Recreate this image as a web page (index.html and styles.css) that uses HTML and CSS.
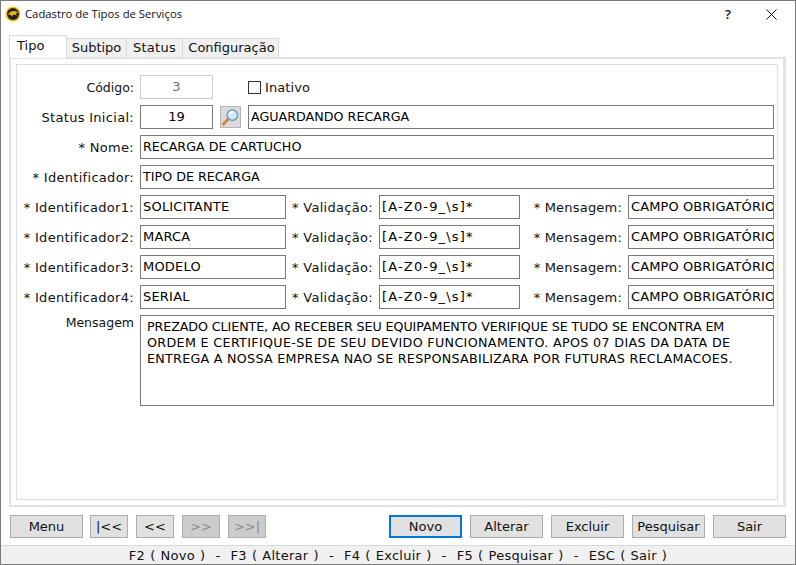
FILE: index.html
```html
<!DOCTYPE html>
<html lang="pt-BR">
<head>
    <meta charset="UTF-8">
    <meta name="viewport" content="width=device-width, initial-scale=1.0">
    <title>Cadastro de Tipos de Serviços</title>
    <link rel="stylesheet" href="styles.css">
</head>
<body>
    <div class="window">
        <header class="titlebar">
            <svg class="app-icon" width="16" height="16" viewBox="0 0 16 16">
                <circle cx="8" cy="8" r="7.5" fill="#f2c40f"/>
                <circle cx="8" cy="8" r="6" fill="#26221a"/>
                <path d="M2.5 8.5 L6 5.5 L10 5 L13.5 6.5 L10.5 7.5 L12 9.5 L8.5 8.5 L6.5 10.5 L5.5 8.5 Z" fill="#e8b90c"/>
            </svg>
            <span class="title">Cadastro de Tipos de Serviços</span>
            <span class="help">?</span>
            <svg class="close" width="11" height="11" viewBox="0 0 11 11">
                <path d="M0.5 0.5 L10.5 10.5 M10.5 0.5 L0.5 10.5" stroke="#111" stroke-width="1" fill="none"/>
            </svg>
        </header>

        <nav class="tabs">
            <div class="tab tab-active">Tipo</div>
            <div class="tab tab-subtipo">Subtipo</div>
            <div class="tab tab-status">Status</div>
            <div class="tab tab-config">Configuração</div>
        </nav>

        <section class="tab-pane">
            <div class="panel">
                <div class="row">
                    <label class="lbl lbl-main lbl-code">Código:</label>
                    <div class="field field-code field-disabled">3</div>
                    <span class="check"></span>
                    <span class="check-text">Inativo</span>
                </div>
                <div class="row">
                    <label class="lbl lbl-main">Status Inicial:</label>
                    <div class="field field-code">19</div>
                    <button class="lookup">
                        <svg width="20" height="20" viewBox="0 0 20 20">
                            <path d="M2.5 17.5 L8 11.5" stroke="#c98a3c" stroke-width="3" stroke-linecap="round"/>
                            <circle cx="12" cy="8" r="5.5" fill="#cfe8fa" stroke="#6f94b8" stroke-width="1.4"/>
                            <path d="M9 7.5 A3.5 3.5 0 0 1 12.5 4.5" stroke="#fff" stroke-width="1.4" fill="none"/>
                        </svg>
                    </button>
                    <div class="field field-grow">AGUARDANDO RECARGA</div>
                </div>
                <div class="row">
                    <label class="lbl lbl-main">* Nome:</label>
                    <div class="field field-grow">RECARGA DE CARTUCHO</div>
                </div>
                <div class="row">
                    <label class="lbl lbl-main">* Identificador:</label>
                    <div class="field field-grow">TIPO DE RECARGA</div>
                </div>
                <div class="row">
                    <label class="lbl lbl-main">* Identificador1:</label>
                    <div class="field field-id">SOLICITANTE</div>
                    <label class="lbl lbl-val">* Validação:</label>
                    <div class="field field-val">[A-Z0-9_\s]*</div>
                    <label class="lbl lbl-msg">* Mensagem:</label>
                    <div class="field field-msg">CAMPO OBRIGATÓRIO</div>
                </div>
                <div class="row">
                    <label class="lbl lbl-main">* Identificador2:</label>
                    <div class="field field-id">MARCA</div>
                    <label class="lbl lbl-val">* Validação:</label>
                    <div class="field field-val">[A-Z0-9_\s]*</div>
                    <label class="lbl lbl-msg">* Mensagem:</label>
                    <div class="field field-msg">CAMPO OBRIGATÓRIO</div>
                </div>
                <div class="row">
                    <label class="lbl lbl-main">* Identificador3:</label>
                    <div class="field field-id">MODELO</div>
                    <label class="lbl lbl-val">* Validação:</label>
                    <div class="field field-val">[A-Z0-9_\s]*</div>
                    <label class="lbl lbl-msg">* Mensagem:</label>
                    <div class="field field-msg">CAMPO OBRIGATÓRIO</div>
                </div>
                <div class="row">
                    <label class="lbl lbl-main">* Identificador4:</label>
                    <div class="field field-id">SERIAL</div>
                    <label class="lbl lbl-val">* Validação:</label>
                    <div class="field field-val">[A-Z0-9_\s]*</div>
                    <label class="lbl lbl-msg">* Mensagem:</label>
                    <div class="field field-msg">CAMPO OBRIGATÓRIO</div>
                </div>
                <div class="row row-text">
                    <label class="lbl lbl-main lbl-top">Mensagem</label>
                    <div class="field field-grow textarea">
                        <div class="line line-1">PREZADO CLIENTE, AO RECEBER SEU EQUIPAMENTO VERIFIQUE SE TUDO SE ENCONTRA EM</div>
                        <div class="line line-2">ORDEM E CERTIFIQUE-SE DE SEU DEVIDO FUNCIONAMENTO. APOS 07 DIAS DA DATA DE</div>
                        <div class="line line-3">ENTREGA A NOSSA EMPRESA NAO SE RESPONSABILIZARA POR FUTURAS RECLAMACOES.</div>
                    </div>
                </div>
            </div>
        </section>

        <div class="buttons">
            <button class="btn btn-wide btn-menu">Menu</button>
            <button class="btn btn-nav">|&lt;&lt;</button>
            <button class="btn btn-nav">&lt;&lt;</button>
            <button class="btn btn-nav btn-off">&gt;&gt;</button>
            <button class="btn btn-nav btn-off">&gt;&gt;|</button>
            <div class="spacer"></div>
            <button class="btn btn-wide btn-focus">Novo</button>
            <button class="btn btn-wide">Alterar</button>
            <button class="btn btn-wide">Excluir</button>
            <button class="btn btn-wide">Pesquisar</button>
            <button class="btn btn-wide">Sair</button>
        </div>

        <footer class="shortcuts">F2 ( Novo )&nbsp; -&nbsp; F3 ( Alterar )&nbsp; -&nbsp; F4 ( Excluir )&nbsp; -&nbsp; F5 ( Pesquisar )&nbsp; -&nbsp; ESC ( Sair )</footer>
    </div>
</body>
</html>
```

FILE: styles.css
```css
html, body {
    margin: 0;
    padding: 0;
}
body {
    font-family: "DejaVu Sans", Verdana, sans-serif;
    font-size: 13px;
    color: #111;
    background-color: #fff;
}
.window {
    width: 796px;
    height: 565px;
    box-sizing: border-box;
    border: 1px solid #7a7a7a;
    display: flex;
    flex-direction: column;
    background-color: #fff;
    overflow: hidden;
}
.titlebar {
    height: 34px;
    flex: none;
    display: flex;
    align-items: flex-start;
    padding: 5px 0 0 4px;
    box-sizing: border-box;
}
.app-icon {
    margin-right: 4px;
}
.title {
    font-family: "Open Sans", "Noto Sans", sans-serif;
    font-size: 11.3px;
    line-height: 16px;
    flex: 1;
}
.help {
    font-family: "Open Sans", sans-serif;
    font-size: 13px;
    font-weight: 600;
    line-height: 16px;
    margin-right: 35px;
}
.close {
    margin: 3px 18px 0 0;
}
.tabs {
    height: 22px;
    flex: none;
    display: flex;
    align-items: flex-end;
    padding-left: 8px;
    position: relative;
    z-index: 1;
}
.tab {
    height: 19px;
    box-sizing: border-box;
    background-color: #f0f0f0;
    border: 1px solid #d9d9d9;
    border-left: none;
    border-bottom: none;
    text-align: center;
    line-height: 18px;
}
.tab-active {
    width: 58px;
    height: 23px;
    margin-bottom: -1px;
    background-color: #fff;
    border-left: 1px solid #d9d9d9;
    line-height: 20px;
    text-align: left;
    padding-left: 7px;
}
.tab-subtipo { width: 60px; }
.tab-status { width: 56px; letter-spacing: 0.3px; }
.tab-config { width: 96px; padding-left: 2px; }
.tab-pane {
    height: 450px;
    flex: none;
    margin: 0 9px 0 8px;
    border: 2px solid #e3e3e3;
    border-right-width: 3px;
    box-sizing: border-box;
    padding: 5px;
}
.panel {
    height: 100%;
    box-sizing: border-box;
    border: 1px solid #dcdcdc;
    padding: 10px 3px 0 0;
    display: flex;
    flex-direction: column;
    gap: 6px;
}
.row {
    display: flex;
    align-items: center;
    height: 24px;
    flex: none;
}
.row-text {
    height: 91px;
    align-items: flex-start;
}
.lbl {
    text-align: right;
    white-space: nowrap;
    line-height: 24px;
    padding-top: 2px;
    letter-spacing: 0.3px;
}
.lbl-main {
    width: 117px;
    margin-right: 6px;
}
.lbl-code {
    font-size: 12.5px;
    letter-spacing: 0;
}
.lbl-top {
    line-height: 16px;
    padding-top: 0;
    font-size: 12.5px;
    letter-spacing: 0;
}
.lbl-val {
    width: 81px;
    margin: 0 6px 0 6px;
}
.lbl-msg {
    width: 89px;
    margin: 0 6px 0 13px;
    letter-spacing: 0.2px;
}
.field {
    height: 24px;
    box-sizing: border-box;
    background-color: #fff;
    border: 1px solid #7a7a7a;
    font-size: 12.7px;
    line-height: 22px;
    padding: 0 2px;
    white-space: nowrap;
    overflow: hidden;
    color: #000;
}
.field-code {
    width: 73px;
    text-align: center;
    font-size: 13px;
}
.field-disabled {
    border-color: #cccccc;
    color: #6d6d6d;
}
.field-grow {
    flex: 1;
}
.field-id {
    width: 146px;
    font-size: 13px;
    letter-spacing: 0.2px;
}
.field-val {
    width: 141px;
    font-size: 13px;
    letter-spacing: 1.15px;
}
.field-msg {
    width: 146px;
    font-size: 13px;
    letter-spacing: 0.1px;
}
.textarea {
    height: 91px;
    padding: 3px 6px;
    line-height: 16px;
}
.line-1 { letter-spacing: -0.1px; }
.line-2 { letter-spacing: 0.34px; }
.line-3 { letter-spacing: 0.27px; }
.check {
    width: 11px;
    height: 11px;
    border: 1px solid #333;
    margin: 0 4px 0 35px;
}
.check-text {
    line-height: 24px;
    padding-top: 2px;
    letter-spacing: 0.1px;
}
.lookup {
    width: 21px;
    height: 22px;
    margin: 0 7px;
    padding: 0;
    background-color: #d9d9d9;
    border: 1px solid #b5b5b5;
    display: flex;
    align-items: center;
    justify-content: center;
}
.buttons {
    flex: none;
    display: flex;
    gap: 8px;
    padding: 8px 9px 0 9px;
    height: 30px;
    box-sizing: content-box;
}
.spacer {
    flex: 1;
}
.btn {
    height: 23px;
    box-sizing: border-box;
    background-color: #e1e1e1;
    border: 1px solid #adadad;
    font-family: "DejaVu Sans", Verdana, sans-serif;
    font-size: 13px;
    color: #111;
    padding: 0;
}
.btn-wide {
    width: 73px;
}
.btn-menu {
    margin-right: -1px;
}
.btn-nav {
    width: 38px;
}
.btn-off {
    background-color: #cccccc;
    color: #8a8a8a;
}
.btn-focus {
    border: 2px solid #0078d7;
}
.shortcuts {
    flex: 1;
    background-color: #f0f0f0;
    border-top: 1px solid #d9d9d9;
    text-align: center;
    line-height: 20px;
    white-space: nowrap;
    letter-spacing: 0.25px;
    word-spacing: 0.7px;
}
```
